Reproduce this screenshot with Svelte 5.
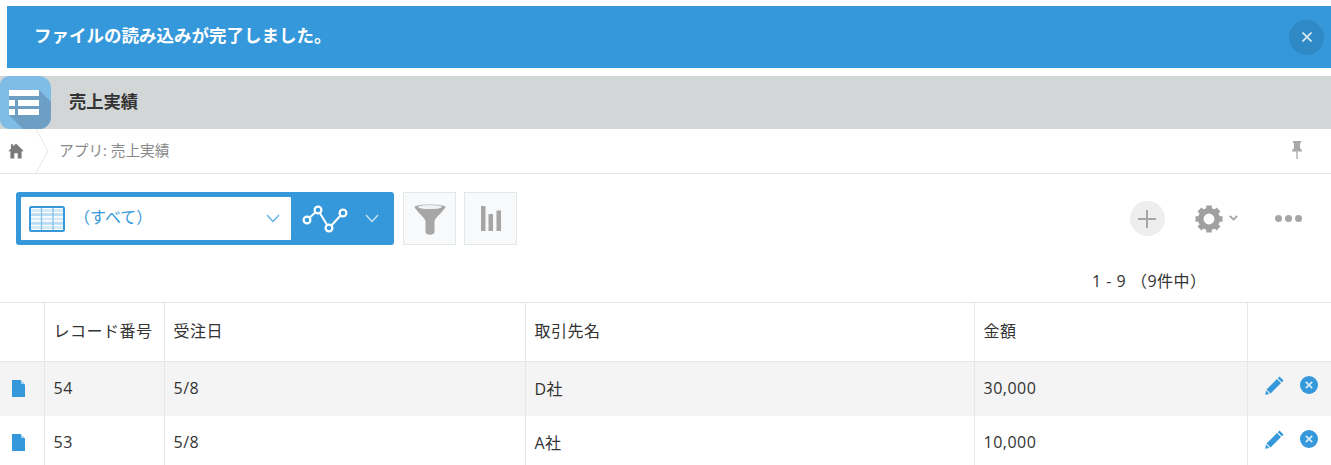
<script>
  const rows = [
    { no: '54', date: '5/8', name: 'D社', amount: '30,000' },
    { no: '53', date: '5/8', name: 'A社', amount: '10,000' }
  ];
  const teeth = [0, 45, 90, 135];
</script>

<div class="page">
  <div class="banner">
    <span class="banner-text">ファイルの読み込みが完了しました。</span>
    <button class="banner-close" aria-label="閉じる">
      <svg width="10" height="10" viewBox="0 0 10 10"><path d="M.5 .5L9.500 9.500M9.500 .5L.5 9.500" stroke="#dbe9f5" stroke-width="1.700" /></svg>
    </button>
  </div>

  <header class="app-header">
    <div class="app-icon">
      <svg width="51" height="53" viewBox="0 0 51 53">
        <path d="M9 39L23 53L51 53L51 26L39 14L9 14Z" fill="#6d9fc4" />
        <path d="M9 14H39V20H9ZM9 24H15V30H9ZM18 24H39V30H18ZM9 33H15V39H9ZM18 33H39V39H18Z" fill="#fff" />
      </svg>
    </div>
    <h1>売上実績</h1>
  </header>

  <nav class="crumbs">
    <svg class="home" width="16" height="16" viewBox="0 0 16 16"><path d="M8 .5L15.800 8.300H13.600V15.500H9.700V10.300H6.300V15.500H2.400V8.300H.2L3 5.500V1.200H5.200V3.300Z" fill="#7a7a7a" /></svg>
    <svg class="chev" width="14" height="44" viewBox="0 0 14 44"><path d="M1 0L13 22L1 44" fill="none" stroke="#e3e7e8" /></svg>
    <span class="crumb">アプリ: 売上実績</span>
    <svg class="pin" width="14" height="20" viewBox="0 0 14 20"><path d="M3 1H11V3H10V8L12 10.500V11.500H2V10.500L4 8V3H3Z" fill="#a8a8a8" /><path d="M7 11V19" stroke="#b5b5b5" stroke-width="1.500" /></svg>
  </nav>

  <section class="toolbar">
    <div class="view-box">
      <div class="view-select">
        <svg width="36" height="26" viewBox="0 0 36 26">
          <rect x="1" y="1" width="34" height="24" rx="1.500" fill="#fff" stroke="#3498db" stroke-width="2" />
          <path d="M2 4.500H34M2 13H34M2 21.500H34" stroke="#d5eaf8" stroke-width="3" />
          <path d="M2 8.750H34M2 17.250H34" stroke="#b9dcf4" stroke-width="3" />
          <path d="M2 6.500H34M2 11H34M2 15H34M2 19.500H34" stroke="#fff" stroke-width=".8" />
          <path d="M12.500 2V24M24 2V24" stroke="#85c1ea" stroke-width="1.300" />
        </svg>
        <span class="view-name">（すべて）</span>
        <svg class="caret" width="14" height="9" viewBox="0 0 14 9"><path d="M1 1L7 7.500L13 1" fill="none" stroke="#5aaee3" stroke-width="1.200" /></svg>
      </div>
      <div class="view-graph">
        <svg width="46" height="28" viewBox="0 0 46 28">
          <path d="M5 15L16 5M16 5L27 23M27 23L41 8" stroke="#fff" stroke-width="2" fill="none" />
          <g fill="#3498db" stroke="#fff" stroke-width="2.200">
            <circle cx="5" cy="15" r="3.400" /><circle cx="16" cy="5" r="3.400" /><circle cx="27" cy="23" r="3.400" /><circle cx="41" cy="8" r="3.400" />
          </g>
        </svg>
        <svg class="caret2" width="14" height="9" viewBox="0 0 14 9"><path d="M1 1L7 7.500L13 1" fill="none" stroke="#cfe6f7" stroke-width="1.200" /></svg>
      </div>
    </div>
    <button class="tool" aria-label="絞り込む">
      <svg width="32" height="32" viewBox="0 0 32 32">
        <path d="M.5 4C.5 .5 31.500 .5 31.500 4C31.500 6 21 15 20.500 18V29C20.500 32.500 11.500 32.500 11.500 29V18C11 15 .5 6 .5 4Z" fill="#a6a6a6" />
        <ellipse cx="16" cy="4" rx="12" ry="2" fill="#f1f2f3" />
      </svg>
    </button>
    <button class="tool" aria-label="グラフ">
      <svg width="20" height="25" viewBox="0 0 20 25"><path d="M0 0H4.500V25H0ZM7.500 8H12V25H7.500ZM15.500 4.500H20V25H15.500Z" fill="#a6a6a6" /></svg>
    </button>

    <div class="actions">
      <button class="add" aria-label="追加">
        <svg width="18" height="18" viewBox="0 0 18 18"><path d="M9 0V18M0 9H18" stroke="#a6a6a6" stroke-width="2" /></svg>
      </button>
      <button class="gear" aria-label="設定">
        <svg width="28" height="28" viewBox="0 0 28 28">
          <circle cx="14" cy="14" r="8.200" fill="none" stroke="#a0a0a0" stroke-width="5.500" />
          {#each teeth as t}
            <path d="M14 .5V27.500" stroke="#a0a0a0" stroke-width="5.500" transform={`rotate(${t} 14 14)`} stroke-dasharray="5 17 5" />
          {/each}
        </svg>
        <svg width="9" height="6" viewBox="0 0 9 6"><path d="M.8 .8L4.500 4.500L8.200 .8" fill="none" stroke="#a0a0a0" stroke-width="1.700" /></svg>
      </button>
      <div class="dots" aria-hidden="true"><i></i><i></i><i></i></div>
    </div>
  </section>

  <div class="range">1 - 9 （9件中）</div>

  <table>
    <colgroup>
      <col class="c0" /><col class="c1" /><col class="c2" /><col class="c3" /><col class="c4" /><col />
    </colgroup>
    <thead>
      <tr><th></th><th>レコード番号</th><th>受注日</th><th>取引先名</th><th>金額</th><th></th></tr>
    </thead>
    <tbody>
      {#each rows as r}
        <tr>
          <td class="doc">
            <svg width="13" height="17" viewBox="0 0 13 17"><path d="M0 0H8.500L13 4.500V17H0Z" fill="#3498db" /><path d="M9 .5L12.500 4H9Z" fill="#a9d3f0" /></svg>
          </td>
          <td>{r.no}</td>
          <td>{r.date}</td>
          <td>{r.name}</td>
          <td>{r.amount}</td>
          <td class="ops">
            <div class="ops-inner">
              <svg width="19" height="19" viewBox="0 0 19 19"><path d="M14.500 .5L18.500 4.500L16.800 6.200L12.800 2.200ZM12 3L16 7L5.500 17.500L1.500 13.500ZM1 14.500L4.500 18L.2 18.800Z" fill="#3498db" /></svg>
              <svg width="18" height="18" viewBox="0 0 18 18"><circle cx="9" cy="9" r="9" fill="#3498db" /><path d="M5.800 5.800L12.200 12.200M12.200 5.800L5.800 12.200" stroke="#d6e9f7" stroke-width="1.800" /></svg>
            </div>
          </td>
        </tr>
      {/each}
    </tbody>
  </table>
</div>

<style>
  :global(body) {
    margin: 0;
    overflow: hidden;
    background: #fff;
  }
  .page {
    width: 1331px;
    height: 465px;
    overflow: hidden;
    padding-top: 6px;
    box-sizing: border-box;
    font-family: "Open Sans", "Noto Sans CJK JP", sans-serif;
    color: #333;
    font-size: 14px;
  }
  button {
    padding: 0;
    border: none;
    background: none;
    display: flex;
    align-items: center;
    justify-content: center;
  }
  .banner {
    margin-left: 7px;
    height: 62px;
    background: #3498db;
    display: flex;
    align-items: center;
    justify-content: space-between;
    padding: 0 7px 0 27px;
  }
  .banner-text {
    color: #fff;
    font-weight: 700;
    font-size: 17.500px;
    position: relative;
    top: -3px;
  }
  .banner-close {
    width: 35px;
    height: 35px;
    border-radius: 50%;
    background: #2f89c5;
  }
  .app-header {
    margin-top: 8px;
    height: 53px;
    background: #d3d6d7;
    display: flex;
    align-items: center;
  }
  .app-icon {
    width: 51px;
    height: 53px;
    background: #7fbde6;
    border-radius: 9px 12px 12px 9px;
    overflow: hidden;
    flex: none;
  }
  .app-icon svg { display: block; }
  h1 {
    margin: 0 0 4px 18px;
    font-size: 17.300px;
    font-weight: 700;
    color: #333;
  }
  .crumbs {
    height: 44px;
    border-bottom: 1px solid #e3e7e8;
    display: flex;
    align-items: center;
  }
  .home { margin-left: 8px; flex: none; }
  .chev { margin-left: 11px; flex: none; }
  .crumb {
    margin-left: 10px;
    color: #888;
    font-size: 14.700px;
    position: relative;
    top: -2px;
  }
  .pin { margin-left: auto; margin-right: 27px; position: relative; top: -1px; }
  .toolbar {
    margin-top: 18px;
    height: 53px;
    padding-left: 16px;
    display: flex;
    gap: 8px;
    align-items: stretch;
  }
  .view-box {
    width: 378px;
    background: #3498db;
    border-radius: 3px;
    display: flex;
    margin-right: 1px;
  }
  .view-select {
    width: 270px;
    margin: 5px 0 5px 5px;
    background: #fff;
    border-radius: 1px;
    display: flex;
    align-items: center;
    padding-left: 8px;
    box-sizing: border-box;
  }
  .view-name {
    margin-left: 9px;
    color: #3498db;
    font-size: 16px;
    flex: 1;
    position: relative;
    top: -3px;
  }
  .caret { margin-right: 11px; }
  .view-graph {
    flex: 1;
    display: flex;
    align-items: center;
    padding-left: 11px;
  }
  .caret2 { margin-left: 17px; }
  .tool {
    width: 53px;
    height: 53px;
    box-sizing: border-box;
    background: #f7f9fa;
    border: 1px solid #e3e7e8;
  }
  .actions {
    margin-left: auto;
    margin-right: 29px;
    display: flex;
    align-items: center;
  }
  .add {
    width: 35px;
    height: 35px;
    border-radius: 50%;
    background: #eee;
  }
  .gear {
    margin-left: 30px;
    gap: 6px;
  }
  .gear svg:last-child { position: relative; top: -1px; }
  .dots {
    margin-left: 37px;
    display: flex;
    gap: 2.500px;
  }
  .dots i {
    width: 7.500px;
    height: 7.500px;
    background: #a6a6a6;
    border-radius: 50%;
  }
  .range {
    margin-top: 26px;
    height: 20px;
    line-height: 20px;
    padding-left: 1092px;
    font-size: 16px;
    white-space: pre;
    letter-spacing: .5px;
  }
  table {
    margin-top: 11px;
    width: 1331px;
    table-layout: fixed;
    border-collapse: collapse;
  }
  .c0 { width: 44px; }
  .c1 { width: 120px; }
  .c2 { width: 361px; }
  .c3 { width: 449px; }
  .c4 { width: 273px; }
  th, td {
    border-left: 1px solid #e3e7e8;
    text-align: left;
    font-weight: 400;
    font-size: 16px;
    letter-spacing: .5px;
    color: #333;
    white-space: nowrap;
    box-sizing: border-box;
  }
  th { height: 59px; padding: 0 0 4px 9px; }
  td { height: 54px; padding: 0 0 2px 9px; }
  th:first-child, td:first-child { border-left: none; }
  thead tr { border-top: 1px solid #e3e7e8; border-bottom: 1px solid #e3e7e8; }
  tbody tr:nth-child(odd) td { background: #f4f4f4; }
  .doc { padding: 0 0 1px 12px; }
  .doc svg { display: block; }
  .ops { padding: 0 0 0 17px; }
  .ops-inner { display: flex; gap: 16px; align-items: flex-start; position: relative; top: -3px; }
</style>
